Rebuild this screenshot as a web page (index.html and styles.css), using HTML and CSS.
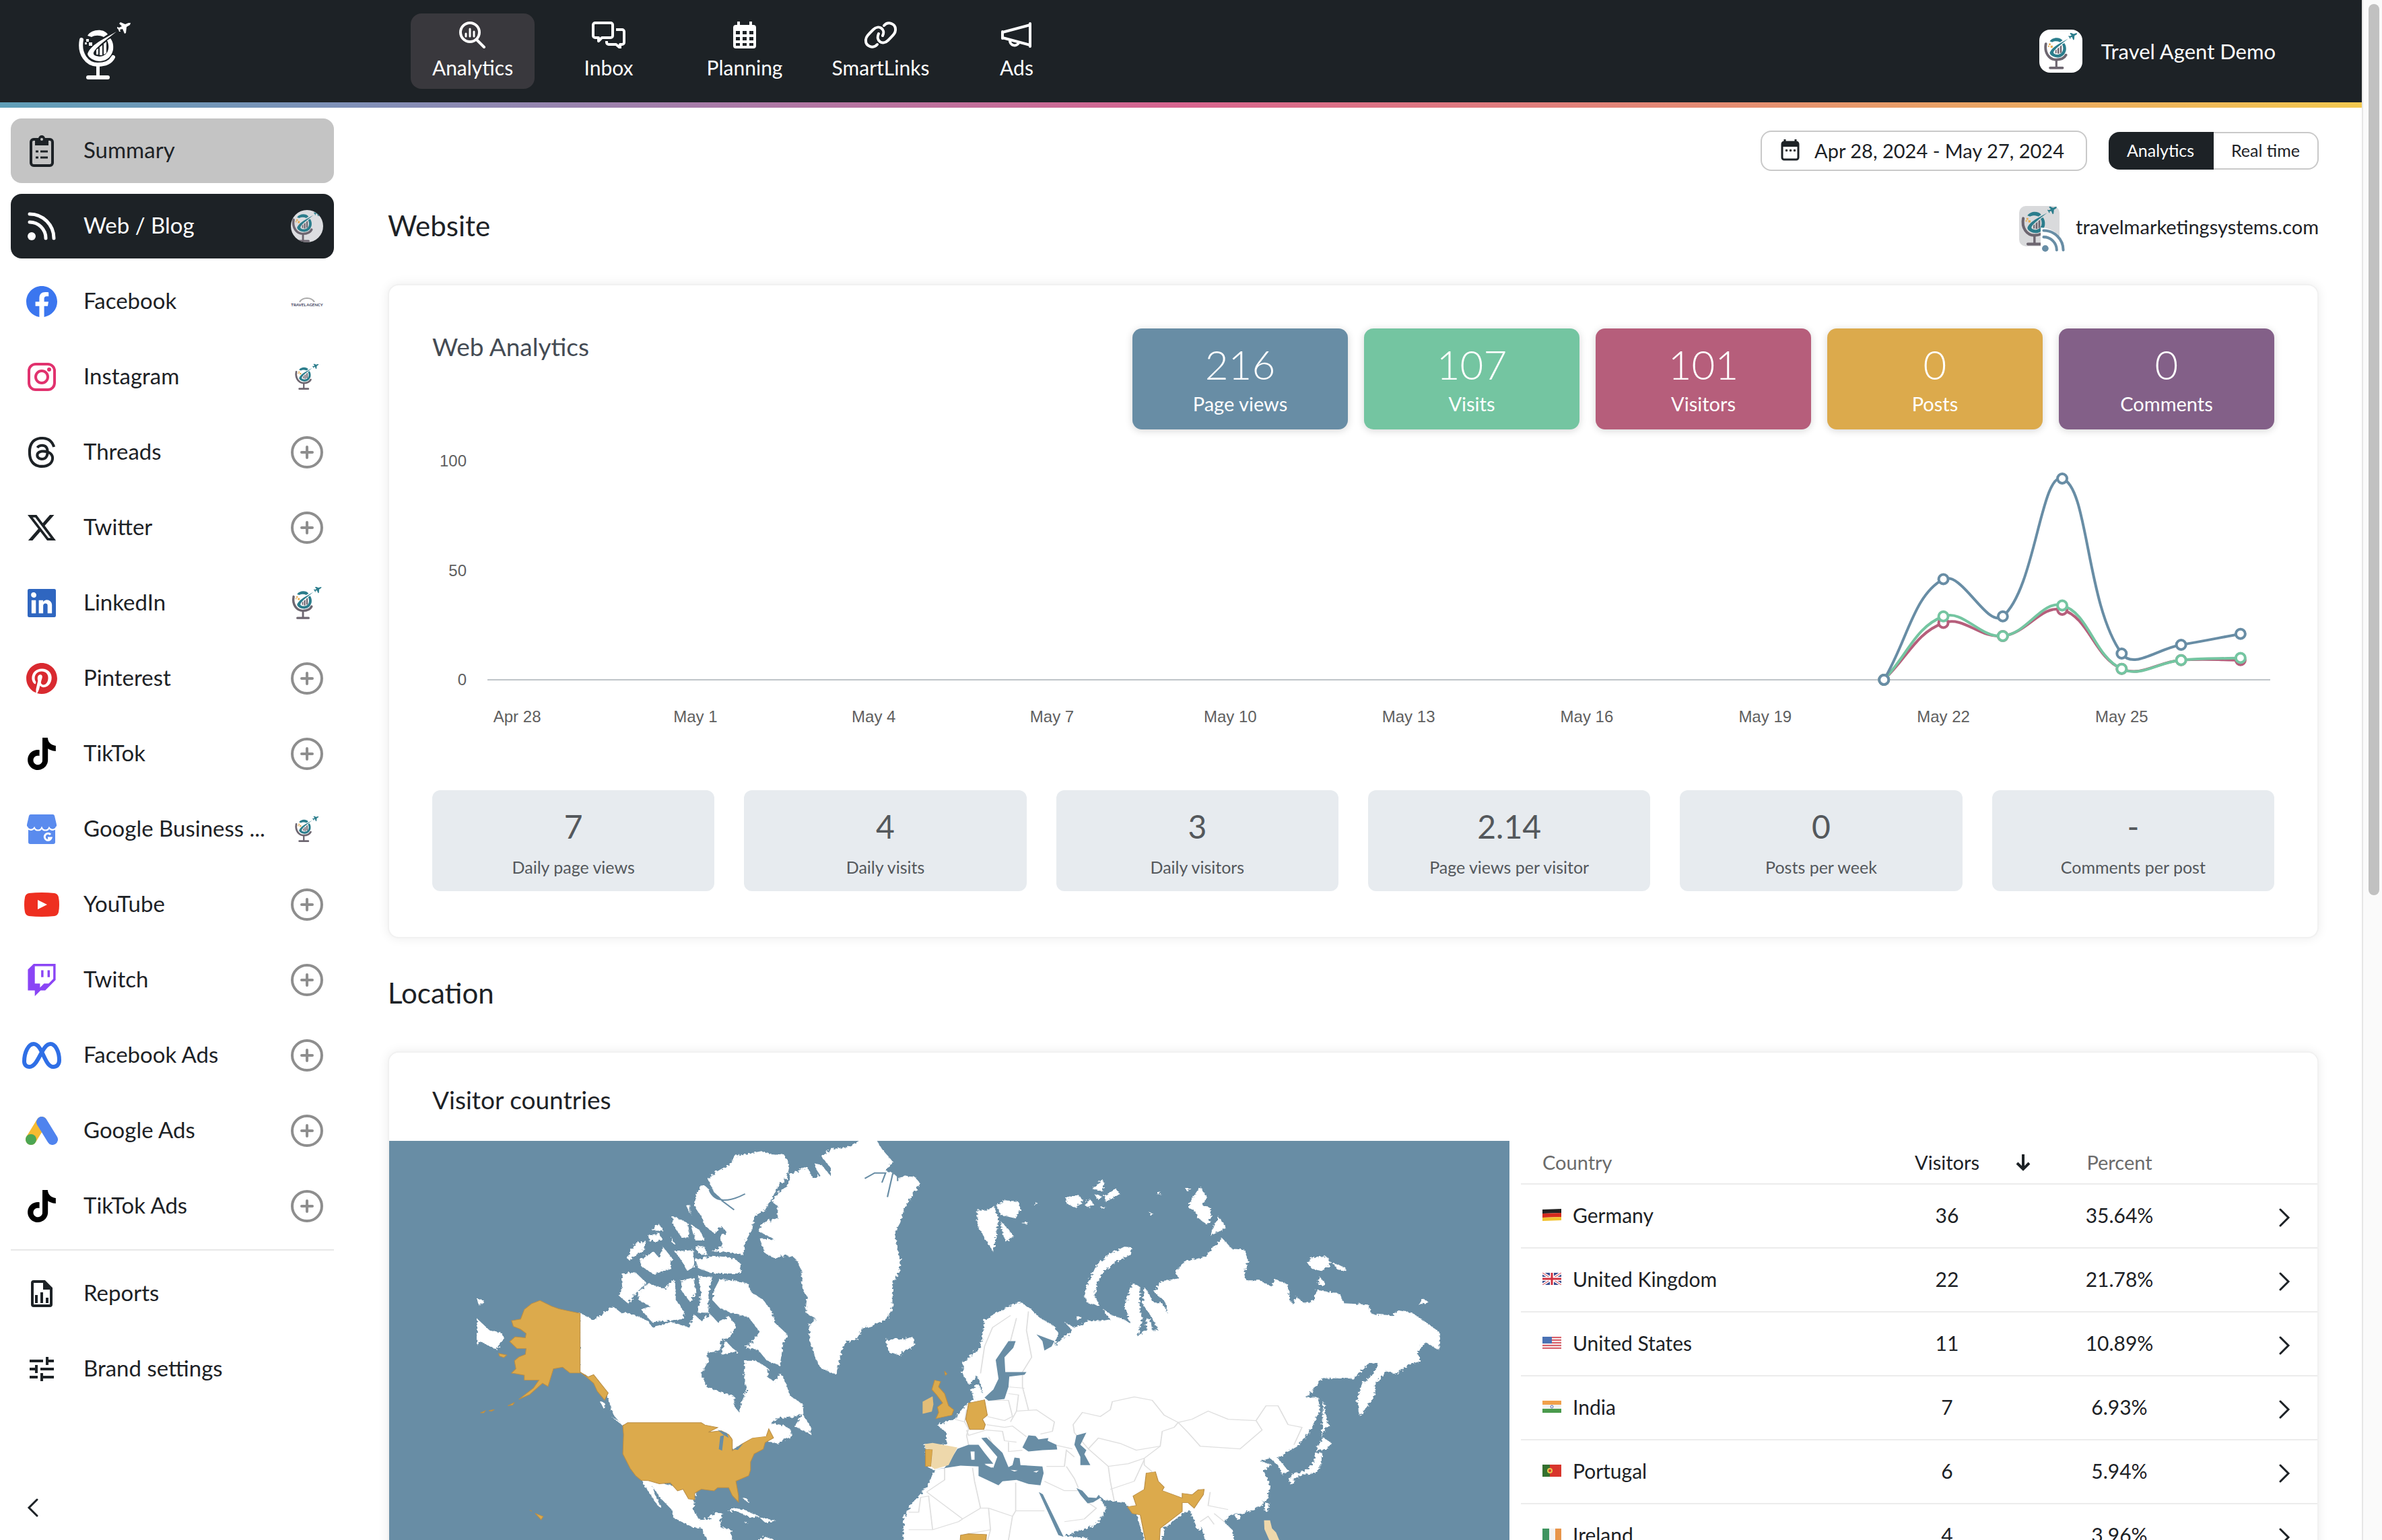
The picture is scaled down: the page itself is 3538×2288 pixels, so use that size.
FILE: index.html
```html
<!doctype html>
<html lang="en">
	<head>
		<title>Travel Agent Demo - Analytics</title>
		<meta charset="utf-8">
		<link rel="stylesheet" href="styles.css">
	</head>
	<body>
		<svg class="defs" aria-hidden="true">
			<symbol id="logo" viewBox="0 0 80 88">
				<path class="logo-arc" d="M5 27C1 48 13 64 29 64C40 64 48 61 52 53" fill="none" stroke-width="6" stroke-linecap="round"/>
				<path class="logo-globe" d="M14 21C20 11 38 10 44 19L38 23C32 20 25 20 20 23z"/>
				<path class="logo-globe" d="M57 15L34 28C24 34 16 41 14 48C15 54 24 59 33 59C44 58 50 51 52 42C53 34 51 29 48 25L43 28C46 34 46 41 43 46C40 51 34 52 31 52C26 51 22 50 23 46C25 41 33 34 43 26z"/>
				<path class="logo-base" d="M27 42l3-2v9h-3zM32 38l4-3v15h-4zM38 33l4-3v17l-4 2z"/>
				<path class="logo-dots" d="M12 26h4v4h-4zM10 31h3v3h-3zM16 31h5v5h-5z"/>
				<path class="logo-globe" d="M78 2L77 5L72 8L71 17L69 18L66 11L62 12L63 15L61 15L60 12L58 10L58 8L61 9L65 7L61 3L63 1L70 4L75 2z"/>
				<path class="logo-base" d="M27 64h5v16h12a3 3 0 0 1 0 6H15a3 3 0 0 1 0-6h12z"/>
			</symbol>
			<symbol id="plus" viewBox="0 0 48 48">
				<g fill="none" stroke="#8e8e8e" stroke-width="4" stroke-linecap="round"><circle cx="24" cy="24" r="22"/><path d="M16 24h16M24 16v16"/></g>
			</symbol>
			<symbol id="tiktok" viewBox="0 0 24 24">
				<path d="M12.525.02c1.31-.02 2.61-.01 3.91-.02.08 1.53.63 3.09 1.75 4.17 1.12 1.11 2.7 1.62 4.24 1.79v4.03c-1.44-.05-2.89-.35-4.2-.97-.57-.26-1.1-.59-1.62-.93-.01 2.92.01 5.84-.02 8.75-.08 1.4-.54 2.79-1.35 3.94-1.31 1.92-3.58 3.17-5.91 3.21-1.43.08-2.86-.31-4.08-1.03-2.02-1.19-3.44-3.37-3.65-5.71-.02-.5-.03-1-.01-1.49.18-1.9 1.12-3.72 2.58-4.96 1.66-1.44 3.98-2.13 6.15-1.72.02 1.48-.04 2.96-.04 4.44-.99-.32-2.15-.23-3.02.37-.63.41-1.11 1.04-1.36 1.75-.21.51-.15 1.07-.14 1.61.24 1.64 1.82 3.02 3.5 2.87 1.12-.01 2.19-.66 2.77-1.61.19-.33.4-.67.41-1.06.1-1.79.06-3.57.07-5.36.01-4.03-.01-8.05.02-12.07z" fill="#000"/>
			</symbol>
			<symbol id="rss" viewBox="0 0 42 42">
				<circle cx="6" cy="36" r="6" fill="currentColor"/><path d="M3 15a24 24 0 0 1 24 24M3 3a36 36 0 0 1 36 36" fill="none" stroke="currentColor" stroke-width="5" stroke-linecap="round"/>
			</symbol>
			<symbol id="chevron" viewBox="0 0 18 28">
				<path d="M3 2L15 14L3 26" fill="none" stroke="#1d2226" stroke-width="3" stroke-linecap="round"/>
			</symbol>
		</svg>
		<div class="page">
			<header class="topbar">
				<a href="#" class="brand" aria-label="Home"><svg class="logo logo-white"><use href="#logo"/></svg></a>
				<nav class="topnav">
					<a href="#analytics" class="topnav-item active">
						<svg viewBox="0 0 40 40"><g fill="none" stroke="#fff" stroke-width="4" stroke-linecap="round"><circle cx="16" cy="16" r="14"/><path d="M26 27L37 38"/><path d="M10 18v4M16 11v11M22 15v7" stroke-width="3"/></g></svg>
						Analytics
					</a>
					<a href="#inbox" class="topnav-item">
						<svg class="wide" viewBox="0 0 50 40"><path d="M5 2h23a3 3 0 0 1 3 3v16a3 3 0 0 1-3 3H15l-5 5v-5H5a3 3 0 0 1-3-3V5a3 3 0 0 1 3-3zM36 12h9a3 3 0 0 1 3 3v16a3 3 0 0 1-3 3h-3v5l-6-5H25a3 3 0 0 1-3-3v-2" fill="none" stroke="#fff" stroke-width="4" stroke-linejoin="round"/></svg>
						Inbox
					</a>
					<a href="#planning" class="topnav-item">
						<svg viewBox="0 0 40 40"><path d="M9 0h4v5h14V0h4v5h2a4 4 0 0 1 4 4v27a4 4 0 0 1-4 4H7a4 4 0 0 1-4-4V9a4 4 0 0 1 4-4h2z" fill="#fff"/><path d="M7 14h6v5H7zM17 14h6v5h-6zM27 14h6v5h-6zM7 23h6v5H7zM17 23h6v5h-6zM27 23h6v5h-6zM7 32h6v4H7zM17 32h6v4h-6zM27 32h6v4h-6z" fill="#1d2226"/></svg>
						Planning
					</a>
					<a href="#smartlinks" class="topnav-item">
						<svg class="wide" viewBox="0 0 50 40"><path d="M20 34C14 41 2 37 3 27C3 23 6 20 14 12C22 4 33 11 28 21M30 6C36-1 48 3 47 13C47 17 44 20 36 28C28 36 17 29 22 18" fill="none" stroke="#fff" stroke-width="4" stroke-linecap="round"/></svg>
						SmartLinks
					</a>
					<a href="#ads" class="topnav-item">
						<svg class="wide" viewBox="0 0 50 40"><path d="M4 15v10M4 16L45 5V35L4 24M15 28a7 7 0 0 0 13 4M45 3v34" fill="none" stroke="#fff" stroke-width="4" stroke-linecap="round" stroke-linejoin="round"/></svg>
						Ads
					</a>
				</nav>
				<button type="button" class="account">
					<span class="avatar"><svg class="logo"><use href="#logo"/></svg></span>
					Travel Agent Demo
				</button>
			</header>
			<div class="layout">
				<aside class="sidebar">
					<nav class="menu">
						<a href="#summary" class="menu-item summary">
							<span class="menu-icon"><svg width="38" height="48" viewBox="0 0 38 48"><path d="M7 7h24a4 4 0 0 1 4 4v31a4 4 0 0 1-4 4H7a4 4 0 0 1-4-4V11a4 4 0 0 1 4-4z" fill="none" stroke="#1d2226" stroke-width="4"/><path d="M9 6h5a5 5 0 0 1 10 0h5v10H9z" fill="#1d2226"/><circle cx="19" cy="7" r="2" fill="#c4c4c4"/><path d="M10 25h4M17 25h11M10 34h4M17 34h11" stroke="#1d2226" stroke-width="3"/></svg></span>
							<span class="menu-label">Summary</span>
						</a>
						<a href="#web" class="menu-item current">
							<span class="menu-icon"><svg width="42" height="42"><use href="#rss"/></svg></span>
							<span class="menu-label">Web / Blog</span>
							<span class="badge round"><svg class="logo"><use href="#logo"/></svg></span>
						</a>
						<a href="#facebook" class="menu-item">
							<span class="menu-icon"><svg width="46" height="46" viewBox="2 2 20 20"><path d="M12 2.04C6.5 2.04 2 6.53 2 12.06C2 17.06 5.66 21.21 10.44 21.96V14.96H7.9V12.06H10.44V9.85C10.44 7.34 11.93 5.96 14.22 5.96C15.31 5.96 16.45 6.15 16.45 6.15V8.62H15.19C13.95 8.62 13.56 9.39 13.56 10.18V12.06H16.34L15.89 14.96H13.56V21.96A10 10 0 0 0 22 12.06C22 6.53 17.5 2.04 12 2.04Z" fill="#3b76ef"/></svg></span>
							<span class="menu-label">Facebook</span>
							<span class="badge agency"><svg width="24" height="8" viewBox="0 0 24 8"><path d="M1 8C5 0 19 0 23 8" fill="none" stroke="#aaa" stroke-width="2"/></svg>TRAVEL AGENCY</span>
						</a>
						<a href="#instagram" class="menu-item">
							<span class="menu-icon"><svg width="42" height="42" viewBox="0 0 42 42"><g fill="none" stroke="#e1326e" stroke-width="4"><rect x="2" y="2" width="38" height="38" rx="10"/><circle cx="21" cy="21" r="9"/></g><circle cx="32" cy="10" r="3" fill="#e1326e"/></svg></span>
							<span class="menu-label">Instagram</span>
							<span class="badge"><svg class="logo"><use href="#logo"/></svg></span>
						</a>
						<a href="#threads" class="menu-item">
							<span class="menu-icon"><svg width="46" height="46" viewBox="0 0 16 16"><path d="M6.321 6.016c-.27-.18-1.166-.802-1.166-.802.756-1.081 1.753-1.502 3.132-1.502.975 0 1.803.327 2.394.948s.928 1.509 1.005 2.644q.492.207.905.484c1.109.745 1.719 1.86 1.719 3.137 0 2.716-2.226 5.075-6.256 5.075C4.594 16 1 13.987 1 7.994 1 2.034 4.482 0 8.044 0 9.69 0 13.55.243 15 5.036l-1.36.353C12.516 1.974 10.163 1.43 8.006 1.43c-3.565 0-5.582 2.171-5.582 6.79 0 4.143 2.254 6.343 5.63 6.343 2.777 0 4.847-1.443 4.847-3.556 0-1.438-1.208-2.127-1.27-2.127-.236 1.234-.868 3.31-3.644 3.31-1.618 0-3.013-1.118-3.013-2.582 0-2.09 1.984-2.847 3.55-2.847.586 0 1.294.04 1.663.114 0-.637-.54-1.728-1.9-1.728-1.25 0-1.566.405-1.967.868ZM8.716 8.19c-2.04 0-2.304.87-2.304 1.416 0 .878 1.043 1.168 1.6 1.168 1.02 0 2.067-.282 2.232-2.423a6.2 6.2 0 0 0-1.528-.161" fill="#1d2226"/></svg></span>
							<span class="menu-label">Threads</span>
							<svg class="badge"><use href="#plus"/></svg>
						</a>
						<a href="#twitter" class="menu-item">
							<span class="menu-icon"><svg width="42" height="42" viewBox="0 0 24 24"><path d="M18.901 1.153h3.68l-8.04 9.19L24 22.846h-7.406l-5.8-7.584-6.638 7.584H.474l8.6-9.83L0 1.154h7.594l5.243 6.932ZM17.61 20.644h2.039L6.486 3.24H4.298Z" fill="#1d2226"/></svg></span>
							<span class="menu-label">Twitter</span>
							<svg class="badge"><use href="#plus"/></svg>
						</a>
						<a href="#linkedin" class="menu-item">
							<span class="menu-icon"><svg width="42" height="42" viewBox="3 3 18 18"><path d="M20 3a1 1 0 0 1 1 1v16a1 1 0 0 1-1 1H4a1 1 0 0 1-1-1V4a1 1 0 0 1 1-1h16m-1.500 15.5v-5.3a3.26 3.26 0 0 0-3.26-3.26c-.85 0-1.84.52-2.32 1.3v-1.11h-2.79v8.37h2.79v-4.93c0-.77.62-1.4 1.39-1.4a1.4 1.4 0 0 1 1.4 1.4v4.93h2.79M6.88 8.56a1.68 1.68 0 0 0 1.68-1.68c0-.93-.75-1.69-1.68-1.69a1.69 1.69 0 0 0-1.69 1.69c0 .93.76 1.68 1.69 1.68m1.39 9.94v-8.37H5.5v8.37h2.77z" fill="#2f66c0"/></svg></span>
							<span class="menu-label">LinkedIn</span>
							<span class="badge zoomed"><svg class="logo"><use href="#logo"/></svg></span>
						</a>
						<a href="#pinterest" class="menu-item">
							<span class="menu-icon"><svg width="46" height="46" viewBox="0 0 24 24"><path d="M12.017 0C5.396 0 .029 5.367.029 11.987c0 5.079 3.158 9.417 7.618 11.162-.105-.949-.199-2.403.041-3.439.219-.937 1.406-5.957 1.406-5.957s-.359-.72-.359-1.781c0-1.663.967-2.911 2.168-2.911 1.024 0 1.518.769 1.518 1.688 0 1.029-.653 2.567-.992 3.992-.285 1.193.6 2.165 1.775 2.165 2.128 0 3.768-2.245 3.768-5.487 0-2.861-2.063-4.869-5.008-4.869-3.41 0-5.409 2.562-5.409 5.199 0 1.033.394 2.143.889 2.741.099.12.112.225.085.345-.09.375-.293 1.199-.334 1.363-.053.225-.172.271-.401.165-1.495-.69-2.433-2.878-2.433-4.646 0-3.776 2.748-7.252 7.92-7.252 4.158 0 7.392 2.967 7.392 6.923 0 4.135-2.607 7.462-6.233 7.462-1.214 0-2.354-.629-2.758-1.379l-.749 2.848c-.269 1.045-1.004 2.352-1.498 3.146 1.123.345 2.306.535 3.55.535 6.607 0 11.985-5.365 11.985-11.987C23.97 5.39 18.592.026 11.985.026L12.017 0z" fill="#d92a30"/></svg></span>
							<span class="menu-label">Pinterest</span>
							<svg class="badge"><use href="#plus"/></svg>
						</a>
						<a href="#tiktok-organic" class="menu-item">
							<span class="menu-icon"><svg width="48" height="48"><use href="#tiktok"/></svg></span>
							<span class="menu-label">TikTok</span>
							<svg class="badge"><use href="#plus"/></svg>
						</a>
						<a href="#google-business" class="menu-item">
							<span class="menu-icon"><svg width="44" height="44" viewBox="0 0 44 44"><path d="M2 22h40v19a3 3 0 0 1-3 3H5a3 3 0 0 1-3-3z" fill="#5a8bee"/><path d="M6 0h32a3 3 0 0 1 3 2l3 13a6 6 0 0 1-11 4a6 6 0 0 1-11 0a6 6 0 0 1-11 0a6 6 0 0 1-11-4L3 2a3 3 0 0 1 3-2z" fill="#5a8bee"/><path d="M0 18a6 6 0 0 0 11 2a6 6 0 0 0 11 0a6 6 0 0 0 11 0a6 6 0 0 0 11-2" fill="none" stroke="#fff" stroke-width="2"/><path d="M35 30A5 5 0 1 0 36 35H31" fill="none" stroke="#fff" stroke-width="3"/></svg></span>
							<span class="menu-label">Google Business ...</span>
							<span class="badge"><svg class="logo"><use href="#logo"/></svg></span>
						</a>
						<a href="#youtube" class="menu-item">
							<span class="menu-icon"><svg width="52" height="36" viewBox="0 0 52 36"><path d="M7 1Q26-1 45 1Q50 2 51 7Q53 18 51 29Q50 34 45 35Q26 37 7 35Q2 34 1 29Q-1 18 1 7Q2 2 7 1z" fill="#ee2f20"/><path d="M20 11L34 18L20 25z" fill="#fff"/></svg></span>
							<span class="menu-label">YouTube</span>
							<svg class="badge"><use href="#plus"/></svg>
						</a>
						<a href="#twitch" class="menu-item">
							<span class="menu-icon"><svg width="48" height="48" viewBox="0 0 24 24"><path d="M11.571 4.714h1.715v5.143H11.57zm4.715 0H18v5.143h-1.714zM6 0L1.714 4.286v15.428h5.143V24l4.286-4.286h3.428L22.286 12V0zm14.571 11.143l-3.428 3.428h-3.429l-3 3v-3H6.857V1.714h13.714Z" fill="#8a45f5"/></svg></span>
							<span class="menu-label">Twitch</span>
							<svg class="badge"><use href="#plus"/></svg>
						</a>
						<a href="#facebook-ads" class="menu-item">
							<span class="menu-icon"><svg width="60" height="40" viewBox="0 0 60 40"><path d="M4 29C4 16 10 3 18 3C31 3 34 37 47 37C53 37 56 33 56 27C56 14 50 3 43 3C30 3 25 37 12 37C7 37 4 34 4 29z" fill="none" stroke="#2f6fe6" stroke-width="6"/></svg></span>
							<span class="menu-label">Facebook Ads</span>
							<svg class="badge"><use href="#plus"/></svg>
						</a>
						<a href="#google-ads" class="menu-item">
							<span class="menu-icon"><svg width="48" height="42" viewBox="0 0 48 42"><g fill="none" stroke-width="16" stroke-linecap="round"><path d="M8 34L24 8" stroke="#f6bb31"/><path d="M24 8L40 34" stroke="#4f83ee"/></g><circle cx="8" cy="34" r="8" fill="#4ca653"/></svg></span>
							<span class="menu-label">Google Ads</span>
							<svg class="badge"><use href="#plus"/></svg>
						</a>
						<a href="#tiktok-ads" class="menu-item">
							<span class="menu-icon"><svg width="48" height="48"><use href="#tiktok"/></svg></span>
							<span class="menu-label">TikTok Ads</span>
							<svg class="badge"><use href="#plus"/></svg>
						</a>
					</nav>
					<nav class="menu menu-extra">
						<a href="#reports" class="menu-item">
							<span class="menu-icon"><svg width="32" height="40" viewBox="0 0 32 40"><path d="M4 2h16l10 10v24a2 2 0 0 1-2 2H4a2 2 0 0 1-2-2V4a2 2 0 0 1 2-2z" fill="none" stroke="#1d2226" stroke-width="4"/><path d="M18 2v12h12M6 22h4v12H6zM14 18h4v16h-4zM22 26h4v8h-4z" fill="#1d2226"/></svg></span>
							<span class="menu-label">Reports</span>
						</a>
						<a href="#settings" class="menu-item">
							<span class="menu-icon"><svg width="36" height="36" viewBox="0 0 36 36"><path d="M0 6h20M24 6h12M26 0v12M0 18h12M16 18h20M10 12v12M0 30h12M16 30h20M18 24v12" fill="none" stroke="#1d2226" stroke-width="4"/></svg></span>
							<span class="menu-label">Brand settings</span>
						</a>
					</nav>
					<button type="button" class="collapse" aria-label="Collapse menu"><svg width="18" height="28" viewBox="0 0 18 28"><path d="M15 2L3 14L15 26" fill="none" stroke="#1d2226" stroke-width="3" stroke-linecap="round"/></svg></button>
				</aside>
				<main class="content">
					<div class="toolbar">
						<button type="button" class="date-range">
							<svg width="28" height="32" viewBox="0 0 28 32"><path d="M6 0v4M22 0v4" stroke="#1d2226" stroke-width="3"/><rect x="2" y="4" width="24" height="26" rx="3" fill="none" stroke="#1d2226" stroke-width="3"/><path d="M2 4h24v7H2z" fill="#1d2226"/><path d="M7 15h3v3H7zM13 15h3v3h-3zM19 15h3v3h-3z" fill="#1d2226"/></svg>
							Apr 28, 2024 - May 27, 2024
						</button>
						<div class="toggle">
							<button type="button" class="toggle-item on" aria-pressed="true">Analytics</button>
							<button type="button" class="toggle-item" aria-pressed="false">Real time</button>
						</div>
					</div>

					<div class="section-head">
						<h2>Website</h2>
						<a href="#site" class="site">
							<span class="site-icon">
								<svg class="logo"><use href="#logo"/></svg>
								<span class="site-rss"><svg width="34" height="34"><use href="#rss"/></svg></span>
							</span>
							travelmarketingsystems.com
						</a>
					</div>
					<section class="card web">
						<div class="web-head">
							<h3>Web Analytics</h3>
							<div class="totals">
								<div class="total blue"><b>216</b><span>Page views</span></div>
								<div class="total green"><b>107</b><span>Visits</span></div>
								<div class="total red"><b>101</b><span>Visitors</span></div>
								<div class="total yellow"><b>0</b><span>Posts</span></div>
								<div class="total purple"><b>0</b><span>Comments</span></div>
							</div>
						</div>
						<svg id="chart" class="chart" viewBox="0 0 2736 536"></svg>
						<div class="averages">
							<div class="average"><b>7</b><span>Daily page views</span></div>
							<div class="average"><b>4</b><span>Daily visits</span></div>
							<div class="average"><b>3</b><span>Daily visitors</span></div>
							<div class="average"><b>2.14</b><span>Page views per visitor</span></div>
							<div class="average"><b>0</b><span>Posts per week</span></div>
							<div class="average"><b>-</b><span>Comments per post</span></div>
						</div>
					</section>

					<div class="section-head">
						<h2>Location</h2>
					</div>
					<section class="card location">
						<h3 class="location-title">Visitor countries</h3>
						<div class="location-body">
							<svg class="map" viewBox="0 0 1664 860" preserveAspectRatio="xMinYMin slice">
								<filter id="coast" x="0" y="0" width="1" height="1"><feTurbulence type="fractalNoise" baseFrequency="0.12" numOctaves="2" seed="4"/><feDisplacementMap in="SourceGraphic" scale="14"/></filter>
								<g transform="matrix(.5421 0 0 .477 -8 -155)">
									<g class="land" filter="url(#coast)">
										<!-- greenland, iceland -->
										<path d="M1307 322L1350 322 1365 350 1395 390 1375 418 1395 425 1410 440 1430 435 1455 437 1470 458 1450 490 1425 540 1415 580 1400 610 1405 650 1415 690 1412 730 1395 770 1393 850 1375 880 1340 900 1312 910 1300 940 1262 952 1250 1000 1240 1052 1200 1035 1185 1010 1168 950 1165 900 1185 880 1155 860 1160 810 1145 780 1145 730 1128 690 1100 680 1075 692 1045 675 1030 630 1070 632 1025 605 1040 580 1080 565 1080 530 1065 515 1080 485 1108 465 1112 430 1160 405 1175 440 1190 440 1180 395 1200 400 1225 435 1225 410 1200 375 1225 350 1270 345z"/>
										<path d="M1375 938L1385 950 1400 940 1420 945 1450 935 1455 960 1412 992 1385 985 1378 965z"/>
										<!-- arctic islands -->
										<path d="M1035 357L1070 370 1095 365 1112 400 1105 440 1085 460 1060 510 1045 540 1015 560 1010 600 990 640 985 680 940 672 900 670 930 650 920 625 940 610 925 590 905 612 880 590 870 560 852 530 855 490 875 460 890 475 905 500 930 512 920 500 905 485 888 445 905 425 945 400 965 370 1000 365z"/>
										<path d="M740 595L755 585 765 605 735 605zM725 620l30-8 8 22-35 5zM792 560l40 20 5 45-20 2-25-40zM842 585l25 20 12 30-25 0zM665 690L690 645 720 635 710 665 675 698zM705 690L740 670 755 690 765 655 790 690 785 725 740 740 705 715zM797 670l50-5 5 50-20 15-15-30zM855 655l25 0 5 25-25-5zM855 695L900 685 960 690 980 710 975 738 900 738 860 720zM828 525l12 0 0 28zM788 625l10 22-8-5z"/>
										<path d="M652 738L690 735 720 768 690 800 670 832 645 808 655 780zM697 795L725 770 770 785 795 757 800 790 800 820 825 860 820 880 780 885 735 890 705 850 730 840 697 820zM815 760L850 750 855 800 840 828 815 790zM862 748L900 748 890 800 890 860 860 860 870 800z"/>
										<path d="M905 790L920 757 965 760 1000 770 1005 795 1040 820 1065 860 1070 890 1108 930 1095 955 1085 1025 1050 1010 1025 975 990 970 1010 950 1030 920 1010 890 1000 875 950 860 920 845 900 820zM935 945l20 25 15 12-30 5-15 5z"/>
										<!-- canada -->
										<path d="M536 860L575 883 628 840 650 860 680 865 725 885 735 905 785 890 835 905 850 865 870 885 895 865 915 890 945 870 965 900 950 935 925 945 920 980 885 985 890 1010 870 1050 885 1093 960 1120 960 1150 975 1172 980 1140 995 1100 985 1060 990 1010 1020 1010 1055 1035 1050 1060 1070 1075 1088 1048 1105 1090 1112 1118 1148 1145 1150 1175 1120 1185 1075 1190 1060 1205 1095 1210 1115 1225 1118 1245 1080 1268 1050 1260 1010 1260 960 1288 870 1210 668 1210 655 1212 630 1180 615 1130 610 1105 575 1053 560 1060 536 1045z"/>
										<path d="M1125 1215L1148 1175 1155 1190 1170 1215 1168 1238 1145 1225zM592 1135l12 5 0 22zM625 1185l35 25-5 2z"/>
										<path d="M255 878L290 915 325 925 330 940 310 975 290 965 265 950 255 962zM255 815l20 8-15 14z"/>
										<!-- central america -->
										<path d="M708 1383L725 1378 855 1420 850 1443 848 1475 865 1505 890 1500 905 1483 928 1485 920 1528 950 1535 970 1640 990 1700 900 1600 870 1530 850 1530 795 1500 790 1475 760 1440 735 1400 745 1430 762 1470 750 1460 715 1400z"/>
										<path d="M940 1478L960 1468 990 1475 1030 1495 1005 1498 965 1478zM1030 1498l45 10-30 6zM985 1510l14 3-8 3zM980 1435l16 4 4 14zM1008 1470l14 18z"/>
										<path d="M985 1690L1010 1580 1045 1558 1100 1580 1180 1640 1240 1720 1250 2200 950 2200z"/>
									</g>
									<g class="water-line"><path d="M892 478C905 515 940 520 990 490M925 510L960 540M1318 442L1345 425 1375 425 1365 455M1395 425L1380 500M1408 420L1408 450M1175 400L1195 435"/></g>
									<g class="visited">
										<path d="M538 862L500 853 480 848 460 840 428 822 405 832 385 850 375 880 350 885 355 903 375 912 390 925 388 938 360 935 345 950 365 972 390 972 388 990 370 998 358 1010 362 1035 350 1048 385 1055 385 1070 425 1070 410 1095 370 1130 400 1115 435 1080 450 1090 465 1035 490 1030 510 1048 538 1048zM538 1045L560 1060 575 1053 615 1110 605 1132 585 1105 575 1080 555 1060zM340 1150l18-10-5 8zM288 1165l15-3-8 5zM265 1172l13-6-4 6zM315 987l22 5-8 8-12-5z"/>
										<path d="M415 1485l22 10-6 10zM400 1475l6 4z"/>
										<path d="M668 1203L870 1203 880 1210 915 1218 890 1232 925 1228 945 1240 955 1255 955 1290 980 1270 1010 1250 1048 1245 1055 1222 1068 1250 1045 1265 1040 1285 1015 1300 1005 1325 1005 1350 1000 1368 965 1385 972 1430 972 1450 955 1430 945 1405 915 1405 905 1415 870 1410 852 1422 852 1443 835 1440 820 1410 805 1415 785 1390 755 1393 725 1383 705 1382 690 1368 675 1345 655 1300 657 1240 655 1212z"/>
									</g>
									<path class="water" d="M922 1245L932 1242 927 1290 918 1285zM915 1225L940 1235 945 1250 930 1240zM958 1285L985 1268 970 1288z"/>
									<path class="land" d="M955 1255L965 1258 985 1265 1010 1250 1048 1245 1040 1215 960 1220z"/>
								</g>
								<g transform="matrix(.5931 0 0 .4005 742 -35)">
									<g class="land" filter="url(#coast)">
										<!-- svalbard, franz josef land -->
										<path d="M222 340L245 345 265 330 275 380 270 430 262 500 245 460 222 400zM270 325L290 308 325 312 330 340 318 375 280 362zM280 385L300 415 312 440 295 465 285 430zM358 325l12-8 5 6zM332 392l18-4-6 8z"/>
										<path d="M510 265l25-35 5 15-5 30zM445 300l30-12 12 22-20 25-20-15zM540 290l30-25 8 20-35 30zM490 320l15-15 10 20-20 8zM515 285l18 8-8 14zM530 330l14 4-8 8z"/>
										<!-- novaya zemlya and the northern islands -->
										<path d="M490 665L500 610 520 550 550 510 590 480 607 482 605 510 565 540 535 575 522 615 515 660 528 700 500 690z"/>
										<path d="M780 257L797 298 785 325 805 335 808 370 798 398 775 375 765 345 750 335 760 300zM825 365L845 410 825 425 806 440zM742 262l14 0-8 14zM668 285l10-10 4 10zM652 350l12 10-10 4z"/>
										<path d="M1048 540L1060 520 1095 515 1108 540 1085 570 1060 562zM1112 540l32 18 0 12-20-5zM1080 592l16 30-22 0zM1338 672l14 14-25 10zM470 735l12 6-10 14zM688 520l10 4zM686 545l8 10z"/>
										<!-- europe, asia, north africa -->
										<path d="M290 710L330 685 355 710 375 740 415 775 425 800 415 845 440 815 460 790 440 760 465 780 500 755 535 755 555 750 535 710 560 735 590 750 605 765 590 700 610 615 630 630 628 700 635 750 622 812 645 790 645 750 655 745 660 790 675 790 660 745 635 690 640 630 650 650 665 690 685 690 700 730 690 680 665 650 682 608 725 598 718 570 745 530 790 520 835 448 860 488 890 490 900 530 890 580 895 605 930 605 960 630 965 600 1000 620 1003 670 1012 695 1020 665 1040 688 1065 680 1070 640 1130 655 1140 690 1200 695 1210 730 1260 735 1275 716 1310 725 1350 765 1380 798 1380 865 1345 835 1335 850 1325 870 1330 905 1300 920 1270 952 1245 940 1220 985 1215 1040 1180 1108 1173 1050 1185 990 1215 950 1225 910 1200 915 1165 970 1130 968 1088 968 1045 1040 1075 1040 1080 1085 1055 1165 1025 1220 1000 1240 975 1265 1000 1310 985 1325 975 1290 955 1265 930 1275 960 1290 938 1310 955 1360 950 1410 930 1445 890 1468 855 1475 840 1500 860 1530 870 1600 840 1700 790 1560 785 1520 775 1535 755 1460 740 1465 690 1525 670 1700 640 1568 620 1470 600 1445 590 1428 540 1420 525 1400 545 1455 520 1510 440 1555 500 1560 420 1900 330 2200 240 2200 200 1800 60 1700 35 1568 38 1480 60 1430 95 1370 115 1310 95 1295 90 1215 145 1213 145 1170 120 1140 165 1120 190 1070 205 1060 212 1035 205 1010 225 990 235 1025 232 1000 222 960 200 990 185 950 185 910 205 885 230 850 238 780 240 750 265 730z"/>
										<!-- sakhalin, japan, taiwan, hainan -->
										<path d="M1088 1045L1095 1110 1102 1145 1090 1160 1085 1200zM1075 1215L1090 1190 1110 1210 1095 1230 1070 1240zM1070 1245L1085 1245 1083 1290 1070 1320 1040 1325 1005 1345 1010 1325 1045 1310 1065 1280zM1003 1340l15 8-10 18zM945 1430l8 0-5 35-8-10zM865 1475l15 0-5 20zM1238 1035l14 12zM1145 1165l8-6zM1170 1130l4-8zM1125 1190l14-12z"/>
									</g>
									<g class="borders">
										<path d="M462 1140L485 1095 530 1110 555 1085 560 1055 615 1037 660 1050 690 1105 725 1132 715 1150 685 1165 680 1220 620 1235 580 1210 525 1190 500 1230 465 1170z"/>
										<path d="M725 1132L760 1120 800 1090 850 1120 920 1125 935 1160 880 1230 780 1220 750 1170zM920 1125L945 1070 975 1070 1000 1140 1035 1150 1015 1215M500 1230L550 1295 600 1285 640 1265 680 1220M640 1265L640 1290 660 1315"/>
										<path d="M350 720L345 790 358 890 335 945 335 1000 350 1085M305 735L260 780 240 850 230 950M320 745L305 830M305 1130L320 1090 370 1085 415 1130 410 1165 380 1175M250 1050L300 1050 310 1110 290 1125 247 1110M300 1000L340 1005M300 1025L325 1030 320 1090M245 1140L290 1150 310 1145 345 1185M195 1160L200 1180 245 1160 285 1165 290 1200 320 1205M165 1120L190 1130 200 1155 195 1180 200 1215M250 1185L270 1240M300 1205L300 1240 335 1235M195 1085L190 1130"/>
										<path d="M95 1390L140 1345 140 1300M95 1390L185 1490 230 1450 215 1350 210 1300M318 1355L318 1460 390 1460M230 1450L250 1450 310 1480 318 1460M50 1465L75 1465 80 1410 100 1405 110 1530 50 1530M110 1530L175 1500 185 1490M250 1450L255 1530 180 1550M310 1480L300 1568M255 1530L248 1568"/>
										<path d="M390 1350L440 1385 475 1385M395 1295L440 1295 445 1235 465 1260M445 1295L465 1340 475 1375M550 1295L555 1350 565 1425M640 1270L615 1350 555 1380M440 1500L490 1490 520 1450 500 1430M415 1215L460 1230M805 1390L800 1440 850 1455M815 1470L840 1500M780 1500L800 1480 815 1510"/>
									</g>
									<path class="water" d="M300 830L318 830 312 855 290 890 292 945 345 945 340 955 302 962 300 1000 290 1045 250 1052 240 1040 262 1010 275 970 268 900z"/>
									<path class="water" d="M112 1308L140 1300 155 1270 172 1230 200 1215 225 1215 240 1245 262 1285 240 1285 262 1300 272 1260 232 1190 245 1188 285 1245 300 1298 310 1290 315 1262 328 1265 330 1290 385 1295 388 1320 380 1365 350 1360 320 1345 285 1350 275 1365 225 1330 225 1295 180 1292z"/>
									<path class="water" d="M350 1180L368 1182 375 1195 400 1190 398 1200 420 1215 422 1232 385 1235 350 1240 335 1225zM470 1180L495 1170 480 1215 495 1235 490 1250 505 1290 480 1290 480 1260 465 1215zM376 1390L386 1398 438 1556 425 1550zM470 1375L485 1385 500 1410 520 1412 526 1400 530 1412 512 1428 498 1432 480 1400zM370 805L415 830 408 850 390 865 385 830z"/>
									<path class="land" d="M205 1240l10 0 0 30-8 0zM240 1288l22-2-4 14zM305 1308l18 2-8 4zM362 1314l14-4-6 8z"/>
									<g class="visited">
										<path d="M115 975L130 980 125 1000 140 1025 150 1070 163 1085 158 1105 118 1118 125 1095 122 1075 135 1060 120 1030 108 1010zM140 942l6 10-4 5z"/>
										<path d="M200 1060L240 1048 247 1105 235 1120 242 1140 238 1158 203 1158 193 1120z"/>
										<path d="M92 1232L110 1232 106 1295 92 1295z"/>
										<path d="M645 1320L668 1315 675 1350 690 1372 685 1385 735 1412 735 1395 760 1400 775 1382 790 1380 788 1400 765 1450 750 1430 735 1430 735 1462 680 1525 676 1620 650 1620 630 1475 610 1470 598 1445 620 1440 612 1405 640 1380z"/>
										<path d="M180 1550L200 1545 245 1548 240 1620 178 1600z"/>
									</g>
									<path class="visited-mid" d="M85 1055L110 1035 112 1065 108 1092 85 1100z"/>
									<path class="visited-low" d="M90 1212L110 1208 172 1225 150 1290 115 1305 106 1295 110 1232 92 1230zM940 1495l15 0 5 30 10 15 8 28-25 0-12-40z"/>
								</g>
							</svg>
							<table class="countries">
								<colgroup><col><col class="col-visitors"><col class="col-sort"><col class="col-percent"><col class="col-open"></colgroup>
								<thead>
									<tr>
										<th class="name">Country</th>
										<th class="sorted">Visitors</th>
										<th><svg width="22" height="26" viewBox="0 0 22 26"><path d="M11 1v22M2 14L11 23L20 14" fill="none" stroke="#1d2226" stroke-width="4"/></svg></th>
										<th>Percent</th>
										<th></th>
									</tr>
								</thead>
								<tbody>
									<tr>
										<td class="name"><svg class="flag" viewBox="0 0 28 18"><path d="M0 1l28-1v6L0 7z" fill="#222"/><path d="M0 7l28-1v6L0 13z" fill="#d42a1e"/><path d="M0 13l28-1v5L0 18z" fill="#f2c230"/></svg>Germany</td>
										<td>36</td><td></td><td>35.64%</td>
										<td class="open"><svg width="18" height="28"><use href="#chevron"/></svg></td>
									</tr>
									<tr>
										<td class="name"><svg class="flag" viewBox="0 0 28 18"><path d="M0 0h28v18H0z" fill="#3a4d8f"/><path d="M0 0L28 18M28 0L0 18" stroke="#fff" stroke-width="4"/><path d="M0 0L28 18M28 0L0 18" stroke="#d0303f" stroke-width="1"/><path d="M14 0v18M0 9h28" stroke="#fff" stroke-width="6"/><path d="M14 0v18M0 9h28" stroke="#d0303f" stroke-width="3"/></svg>United Kingdom</td>
										<td>22</td><td></td><td>21.78%</td>
										<td class="open"><svg width="18" height="28"><use href="#chevron"/></svg></td>
									</tr>
									<tr>
										<td class="name"><svg class="flag" viewBox="0 0 28 18"><path d="M0 0h28v18H0z" fill="#f4e9e9"/><path d="M0 1h28M0 5h28M0 9h28M0 13h28M0 17h28" stroke="#d9606a" stroke-width="2"/><path d="M0 0h14v10H0z" fill="#4a72b4"/></svg>United States</td>
										<td>11</td><td></td><td>10.89%</td>
										<td class="open"><svg width="18" height="28"><use href="#chevron"/></svg></td>
									</tr>
									<tr>
										<td class="name"><svg class="flag" viewBox="0 0 28 18"><path d="M0 0h28v6H0z" fill="#f0a04b"/><path d="M0 6h28v6H0z" fill="#f2f2f2"/><path d="M0 12h28v6H0z" fill="#4a9a4c"/><circle cx="14" cy="9" r="2" fill="none" stroke="#5a6ab0"/></svg>India</td>
										<td>7</td><td></td><td>6.93%</td>
										<td class="open"><svg width="18" height="28"><use href="#chevron"/></svg></td>
									</tr>
									<tr>
										<td class="name"><svg class="flag" viewBox="0 0 28 18"><path d="M0 0h28v18H0z" fill="#d8352c"/><path d="M0 0h11v18H0z" fill="#33702f"/><circle cx="11" cy="9" r="4" fill="#e9c84a"/><circle cx="11" cy="9" r="2" fill="#d8352c"/></svg>Portugal</td>
										<td>6</td><td></td><td>5.94%</td>
										<td class="open"><svg width="18" height="28"><use href="#chevron"/></svg></td>
									</tr>
									<tr>
										<td class="name"><svg class="flag" viewBox="0 0 28 18"><path d="M0 0h10v18H0z" fill="#3f9560"/><path d="M10 0h9v18h-9z" fill="#f2f2f2"/><path d="M19 0h9v18h-9z" fill="#e8954a"/></svg>Ireland</td>
										<td>4</td><td></td><td>3.96%</td>
										<td class="open"><svg width="18" height="28"><use href="#chevron"/></svg></td>
									</tr>
								</tbody>
							</table>
						</div>
					</section>
				</main>
			</div>
		</div>
		<div class="scrollbar"><div class="scrollbar-thumb"></div></div>
		<script src="script.js"></script>
	</body>
</html>
```

FILE: styles.css
```css
* {
	box-sizing: border-box;
	margin: 0;
	padding: 0;
}
body {
	display: flex;
	height: 100vh;
	overflow: hidden;
	background-color: #fff;
	color: #1d2226;
	font-family: Lato, "Open Sans", sans-serif;
	font-size: 32px;
}
a {
	color: inherit;
	text-decoration: none;
}
button {
	border: 0;
	background: none;
	color: inherit;
	font: inherit;
	cursor: pointer;
}
h2, h3, b, th {
	font-weight: normal;
}
svg {
	display: block;
	flex: none;
}
.defs {
	position: absolute;
	width: 0;
	height: 0;
}
.page {
	display: flex;
	flex-direction: column;
	flex: 1;
	min-width: 0;
}

/* logo */
.logo {
	width: 52px;
	height: 56px;
}
.logo-arc { stroke: #6d6670; }
.logo-base { fill: #6d6670; }
.logo-globe { fill: #2b7d8c; }
.logo-dots { fill: #e8ad52; }
.logo-white {
	width: 80px;
	height: 88px;
	filter: brightness(0) invert(1);
}

/* top bar */
.topbar {
	display: flex;
	align-items: center;
	flex: none;
	height: 160px;
	padding-right: 128px;
	border-bottom: 8px solid;
	border-image: linear-gradient(90deg, #5f9fb8, #8090b8 15%, #a87ba8 30%, #d8648f 50%, #e58c72 73%, #f3c94f) 1;
	background-color: #1d2226;
	color: #fff;
}
.brand {
	width: 610px;
	padding-left: 116px;
}
.topnav {
	display: flex;
	gap: 18px;
	flex: 1;
}
.topnav-item {
	display: flex;
	flex-direction: column;
	align-items: center;
	gap: 10px;
	width: 184px;
	height: 112px;
	padding-top: 12px;
	border-radius: 16px;
	font-size: 30px;
	line-height: 36px;
}
.topnav-item.active {
	background-color: #39383d;
}
.topnav-item svg {
	width: 40px;
	height: 40px;
}
.topnav-item svg.wide {
	width: 50px;
}
.account {
	display: flex;
	align-items: center;
	gap: 28px;
	font-size: 31px;
}
.avatar {
	display: flex;
	align-items: center;
	justify-content: center;
	width: 64px;
	height: 64px;
	border-radius: 16px;
	background-color: #fff;
}

/* sidebar */
.layout {
	display: flex;
	flex: 1;
	min-height: 0;
}
.sidebar {
	display: flex;
	flex-direction: column;
	flex: none;
	width: 512px;
	padding: 16px;
}
.menu {
	display: flex;
	flex-direction: column;
	gap: 16px;
}
.menu-extra {
	margin-top: 16px;
	padding-top: 16px;
	border-top: 2px solid #e8e8e8;
}
.menu-item {
	display: flex;
	align-items: center;
	height: 96px;
	padding: 0 16px;
	border-radius: 16px;
	font-size: 33px;
}
.menu-item.summary {
	background-color: #c4c4c4;
}
.menu-item.current {
	background-color: #1d2226;
	color: #fff;
}
.menu-icon {
	display: flex;
	justify-content: center;
	width: 60px;
	margin-right: 32px;
}
.menu-label {
	flex: 1;
	padding-bottom: 4px;
	white-space: nowrap;
}
.badge {
	display: flex;
	align-items: center;
	justify-content: center;
	width: 48px;
	height: 48px;
	overflow: hidden;
}
.badge .logo {
	width: 40px;
	height: 40px;
}
.badge.round {
	border-radius: 50%;
	background-color: #dcdde0;
}
.badge.round .logo,
.badge.zoomed .logo {
	width: 50px;
	height: 50px;
}
.badge.agency {
	flex-direction: column;
	color: #3c3c5c;
	font-size: 6px;
	font-weight: bold;
	white-space: nowrap;
}
.collapse {
	width: 36px;
	height: 48px;
	margin-top: auto;
	margin-left: 24px;
	margin-bottom: 8px;
}

/* content */
.content {
	flex: 1;
	min-width: 0;
	padding: 34px 64px 0;
}
.toolbar {
	display: flex;
	align-items: center;
	justify-content: flex-end;
	gap: 32px;
}
.date-range {
	display: flex;
	align-items: center;
	gap: 22px;
	height: 60px;
	padding: 0 32px 2px 28px;
	border: 2px solid #c9c9c9;
	border-radius: 16px;
	font-size: 29px;
}
.toggle {
	display: flex;
}
.toggle-item {
	width: 156px;
	height: 56px;
	padding-bottom: 2px;
	border: 2px solid #c9c9c9;
	border-left: 0;
	border-radius: 0 16px 16px 0;
	font-size: 25px;
}
.toggle-item.on {
	border-color: #1d2226;
	border-radius: 16px 0 0 16px;
	background-color: #1d2226;
	color: #fff;
}
.section-head {
	display: flex;
	align-items: center;
	justify-content: space-between;
	height: 72px;
	margin: 46px 0 50px;
}
.section-head h2 {
	padding-bottom: 2px;
	font-size: 42px;
}
.site {
	display: flex;
	align-items: center;
	gap: 24px;
	font-size: 29px;
}
.site-icon {
	position: relative;
	width: 60px;
	height: 60px;
	border-radius: 10px;
	background-color: #d9dadc;
}
.site-icon .logo {
	width: 60px;
	height: 60px;
}
.site-rss {
	position: absolute;
	right: -8px;
	bottom: -8px;
	padding: 2px 0 0 2px;
	border-radius: 0 40px 0 0;
	background-color: #fff;
	color: #688da5;
}
.card {
	border: 2px solid #f1f1f1;
	border-radius: 16px;
	background-color: #fff;
	box-shadow: 0 0 16px rgba(0, 0, 0, .08);
}

/* web analytics */
.web {
	padding: 64px 64px 68px;
}
.web-head {
	display: flex;
	justify-content: space-between;
}
.web-head h3 {
	padding-top: 4px;
	color: #444b54;
	font-size: 37px;
}
.totals {
	display: flex;
	gap: 24px;
}
.total {
	display: flex;
	flex-direction: column;
	align-items: center;
	width: 320px;
	height: 150px;
	padding-top: 20px;
	border-radius: 14px;
	box-shadow: 0 2px 12px rgba(0, 0, 0, .16);
	color: #fff;
}
.total b {
	font-size: 60px;
	font-weight: 300;
	line-height: 66px;
}
.total span {
	font-size: 29px;
	line-height: 52px;
}
.blue { background-color: #688da5; }
.green { background-color: #74c5a1; }
.red { background-color: #b65e7b; }
.yellow { background-color: #dcaa4c; }
.purple { background-color: #836088; }

.chart {
	width: 100%;
	font-family: "Liberation Sans", sans-serif;
	font-size: 24px;
}
.chart text {
	fill: #5f5f5f;
}
.averages {
	display: grid;
	grid-template-columns: repeat(6, 1fr);
	gap: 44px;
}
.average {
	display: flex;
	flex-direction: column;
	align-items: center;
	height: 150px;
	padding-top: 22px;
	border-radius: 12px;
	background-color: #e7ebef;
	color: #54585c;
}
.average b {
	font-size: 48px;
	line-height: 64px;
}
.average span {
	font-size: 25px;
	line-height: 56px;
}

/* location */
.location-title {
	padding: 48px 64px 0;
	height: 131px;
	font-size: 37px;
	line-height: 44px;
}
.location-body {
	display: grid;
	grid-template-columns: 581fr 419fr;
}
.map {
	width: 100%;
	background-color: #688da5;
}
.land {
	fill: #fff;
}
.water {
	fill: #688da5;
}
.water-line path {
	fill: none;
	stroke: #688da5;
	stroke-width: 4;
}
.borders path {
	fill: none;
	stroke: #dfdfdf;
	stroke-width: 3;
}
.visited path {
	fill: #dcaa4c;
	stroke: #b98d45;
	stroke-width: 2;
}
.visited-mid { fill: #e3bd78; }
.visited-low { fill: #eed8ab; }

.countries {
	align-self: start;
	margin-left: 17px;
	border-collapse: collapse;
	table-layout: fixed;
	font-size: 30px;
	text-align: center;
}
.col-visitors { width: 180px; }
.col-sort { width: 46px; }
.col-percent { width: 240px; }
.col-open { width: 174px; }
.countries th {
	height: 64px;
	border-bottom: 2px solid #ececec;
	color: #6b6b6b;
	font-size: 29px;
}
.countries th.sorted {
	color: #1d2226;
}
.countries th svg {
	margin: 0 auto;
}
.countries td {
	height: 95px;
	padding-bottom: 4px;
	border-bottom: 2px solid #ececec;
}
.countries .name {
	padding-left: 32px;
	text-align: left;
}
.countries .open {
	padding: 4px 40px 0 0;
}
.open svg {
	margin-left: auto;
}
.flag {
	display: inline-block;
	width: 28px;
	height: 18px;
	margin-right: 17px;
	vertical-align: 3px;
}

.scrollbar {
	flex: none;
	width: 30px;
	padding: 6px 0 0 8px;
	border-left: 2px solid #e6e6e6;
	background-color: #fafafa;
}
.scrollbar-thumb {
	width: 16px;
	height: 58%;
	border-radius: 8px;
	background-color: #c1c1c1;
}
```

FILE: script.js
```js
var chart = document.getElementById('chart');
var left = 82, right = 2730, base = 372, unit = 3.25, days = 30;
var step = (right - left) / days;

// values from May 21 (day 23) to May 27
var series = [
	{ color: '#b65e7b', values: [0, 26, 20, 32, 5, 9, 9] },
	{ color: '#74c5a1', values: [0, 29, 20, 34, 5, 9, 10] },
	{ color: '#688da5', values: [0, 46, 29, 92, 12, 16, 21] }
];
var labels = ['Apr 28', 'May 1', 'May 4', 'May 7', 'May 10', 'May 13', 'May 16', 'May 19', 'May 22', 'May 25'];

function x (day) {
	return left + step * (day + 0.5);
}

function add (name, attrs, text) {
	var el = document.createElementNS('http://www.w3.org/2000/svg', name);
	for (var key in attrs) {
		el.setAttribute(key, attrs[key]);
	}
	if (text) {
		el.textContent = text;
	}
	chart.appendChild(el);
}

// control points on both sides of a point, spread by segment length
function handles (prev, p, next) {
	var a = Math.hypot(p[0] - prev[0], p[1] - prev[1]),
		b = Math.hypot(next[0] - p[0], next[1] - p[1]),
		fa = 0.4 * a / (a + b || 1),
		fb = 0.4 * b / (a + b || 1),
		dx = next[0] - prev[0],
		dy = next[1] - prev[1];
	return [p[0] - fa * dx, p[1] - fa * dy, p[0] + fb * dx, p[1] + fb * dy];
}

[100, 50, 0].forEach(function (v) {
	add('text', { x: 51, y: base - v * unit + 8, 'text-anchor': 'end' }, String(v));
});
labels.forEach(function (label, i) {
	add('text', { x: x(i * 3), y: 435, 'text-anchor': 'middle' }, label);
});
add('line', { x1: left, y1: base, x2: right, y2: base, stroke: '#bfc4c8', 'stroke-width': 2 });

series.forEach(function (s) {
	var pts = s.values.map(function (v, i) {
		return [x(23 + i), base - v * unit];
	});
	var h = pts.map(function (p, i) {
		return handles(pts[i - 1] || p, p, pts[i + 1] || p);
	});
	var d = 'M' + pts[0];
	for (var i = 1; i < pts.length; i++) {
		d += 'C' + [h[i - 1][2], h[i - 1][3], h[i][0], h[i][1], pts[i][0], pts[i][1]];
	}
	add('path', { d: d, fill: 'none', stroke: s.color, 'stroke-width': 4 });
	pts.forEach(function (p) {
		add('circle', { cx: p[0], cy: p[1], r: 7, fill: '#fff', stroke: s.color, 'stroke-width': 4 });
	});
});
```
